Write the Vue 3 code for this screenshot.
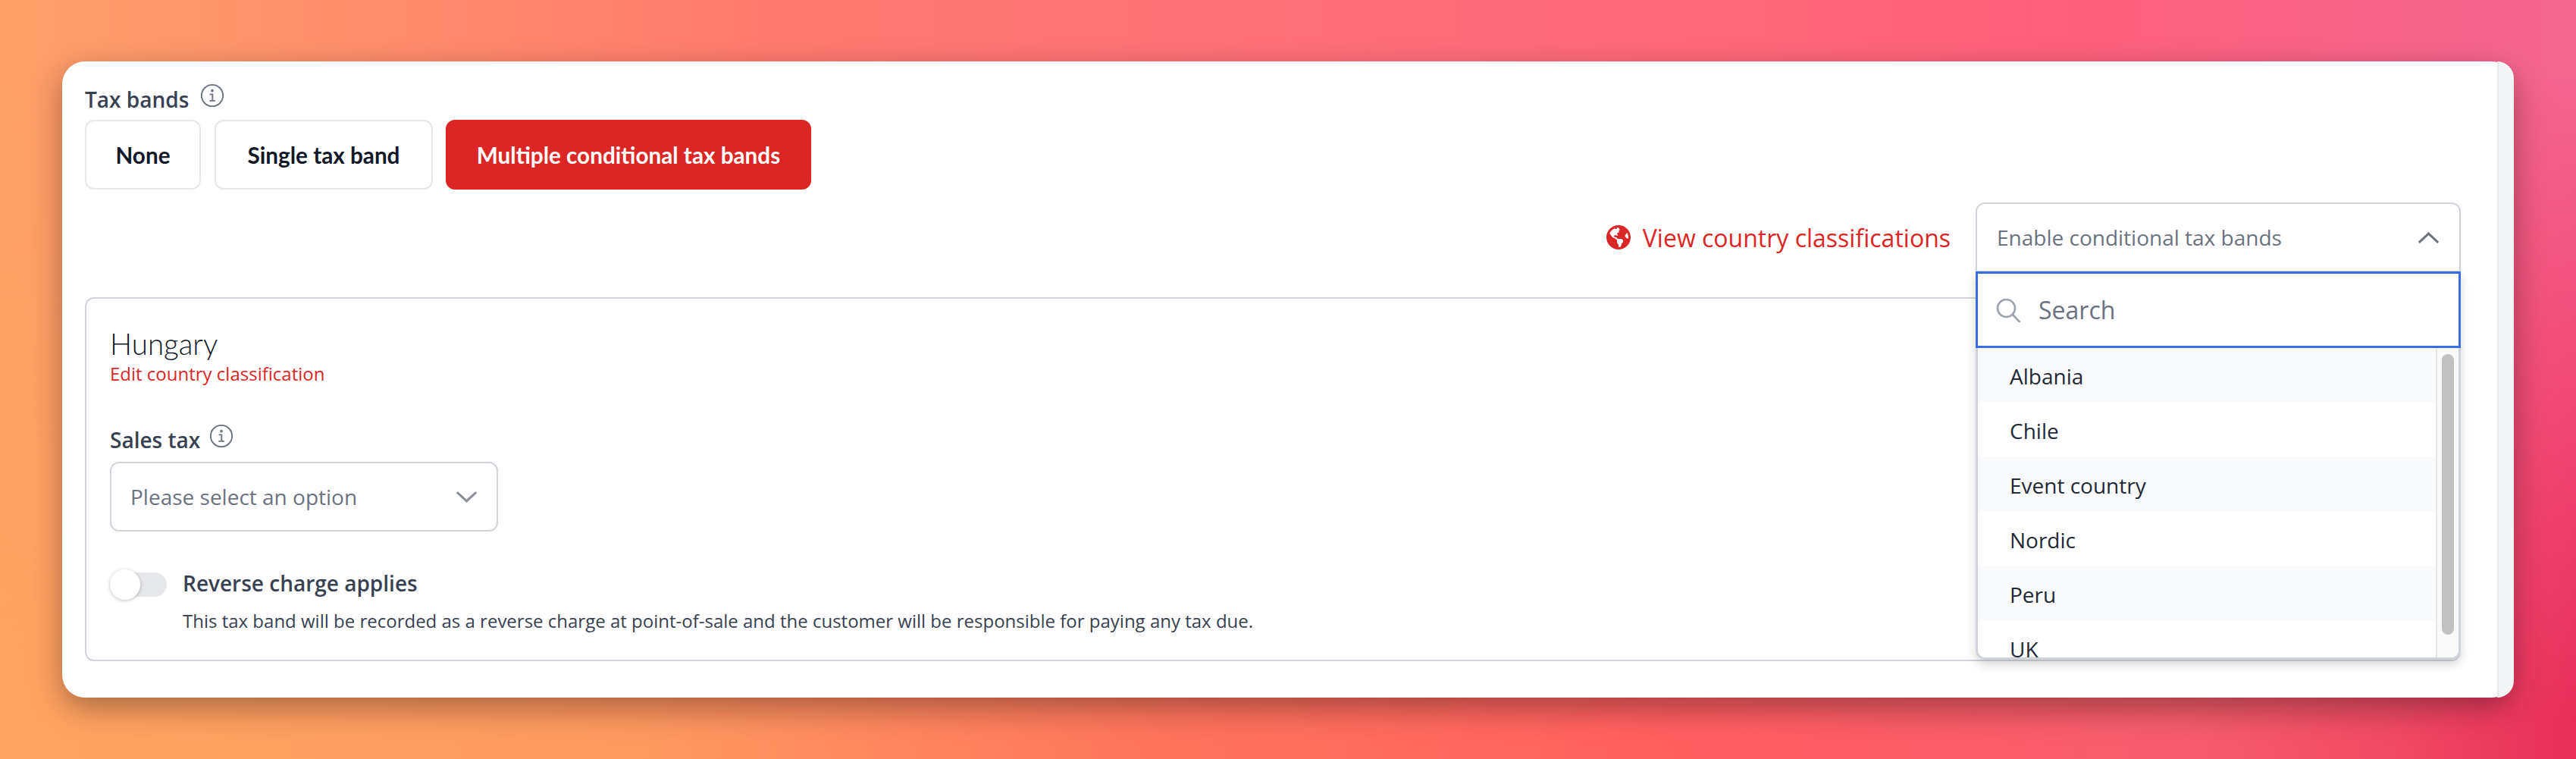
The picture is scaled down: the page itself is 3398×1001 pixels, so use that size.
<template>
  <div class="page">
    <div class="card">
      <div class="main">
        <div class="field-label">
          <span>Tax bands</span>
          <svg class="info" viewBox="0 0 24 24" fill="none" stroke="currentColor" stroke-width="1.4">
            <circle cx="12" cy="12" r="10.6" />
            <path d="M10 10.8h2.2v6.4M9.8 17.2h4.6" stroke-linecap="round" />
            <circle cx="12" cy="7.2" r="0.7" fill="currentColor" />
          </svg>
        </div>
        <div class="band-buttons">
          <button
            v-for="b in bands"
            :key="b"
            class="band-btn"
            :class="{ active: b === activeBand }"
          >
            {{ b }}
          </button>
        </div>

        <div class="tools">
          <a class="country-link">
            <svg class="globe" viewBox="0 0 496 512" fill="currentColor">
              <path d="M248 8C111.03 8 0 119.03 0 256s111.03 248 248 248 248-111.03 248-248S384.97 8 248 8zm82.29 357.6c-3.9 3.88-7.99 7.95-11.31 11.28-2.99 3-5.1 6.7-6.17 10.71-1.51 5.66-2.73 11.38-4.77 16.87l-17.39 46.85c-13.76 3-28 4.69-42.65 4.69v-27.38c1.69-12.62-7.64-36.26-22.63-51.25-6-6-9.37-14.14-9.37-22.63v-32.01c0-11.64-6.27-22.34-16.46-27.97-14.37-7.95-34.81-19.06-48.81-26.11-11.48-5.78-22.1-13.14-31.65-21.75l-.8-.72a114.792 114.792 0 0 1-18.06-20.74c-9.38-13.77-24.66-36.42-34.59-51.14 20.47-45.5 57.36-82.04 103.2-101.89l24.01 12.01C203.48 89.74 216 82.01 216 70.11v-11.3c7.99-1.29 16.12-2.11 24.39-2.42l28.3 28.3c6.25 6.25 6.25 16.38 0 22.63L264 112l-10.34 10.34c-3.12 3.12-3.12 8.19 0 11.31l4.69 4.69c3.12 3.12 3.12 8.19 0 11.31l-8 8a8.008 8.008 0 0 1-5.66 2.34h-8.99c-2.08 0-4.08.81-5.58 2.27l-9.92 9.65a8.008 8.008 0 0 0-1.58 9.31l15.59 31.19c2.66 5.32-1.21 11.58-7.15 11.58h-5.64c-1.93 0-3.79-.7-5.24-1.96l-9.28-8.06a16.017 16.017 0 0 0-15.55-3.1l-31.17 10.39a11.95 11.95 0 0 0-8.17 11.34c0 4.53 2.56 8.66 6.61 10.69l11.08 5.54c9.41 4.71 19.79 7.16 30.31 7.16s22.59 27.29 32 32h66.75c8.49 0 16.62 3.37 22.63 9.37l13.69 13.69a30.503 30.503 0 0 1 8.93 21.57 46.536 46.536 0 0 1-13.72 32.98zM417 274.25c-5.79-1.45-10.84-5-14.15-9.97l-17.98-26.97a23.97 23.97 0 0 1 0-26.62l19.59-29.38c2.32-3.47 5.5-6.28 9.24-8.15l12.98-6.49C440.2 193.59 448 223.87 448 256c0 8.67-.74 17.16-1.82 25.54L417 274.25z" />
            </svg>
            View country classifications
          </a>
          <div class="picker">
            <div class="picker-trigger">
              <span>Enable conditional tax bands</span>
              <svg class="chev" viewBox="0 0 32 18" fill="none" stroke="currentColor" stroke-width="3.2">
                <path d="M2 16 16 3l14 13" />
              </svg>
            </div>
            <div class="picker-panel">
              <div class="picker-search">
                <svg class="search-icon" viewBox="0 0 32 32" fill="none" stroke="currentColor" stroke-width="2.6">
                  <circle cx="13.5" cy="13.5" r="11.5" />
                  <path d="m22 22 9 9.5" stroke-linecap="round" />
                </svg>
                <span>Search</span>
              </div>
              <div class="picker-list">
                <div class="rows">
                  <div v-for="c in countries" :key="c" class="row">{{ c }}</div>
                </div>
                <div class="scroll-track"><div class="scroll-thumb"></div></div>
              </div>
            </div>
          </div>
        </div>

        <section class="country-box">
          <h3 class="country-name">Hungary</h3>
          <a class="edit-link">Edit country classification</a>

          <div class="field-label sales">
            <span>Sales tax</span>
            <svg class="info" viewBox="0 0 24 24" fill="none" stroke="currentColor" stroke-width="1.4">
              <circle cx="12" cy="12" r="10.6" />
              <path d="M10 10.8h2.2v6.4M9.8 17.2h4.6" stroke-linecap="round" />
              <circle cx="12" cy="7.2" r="0.7" fill="currentColor" />
            </svg>
          </div>
          <div class="select">
            <span>Please select an option</span>
            <svg class="chev down" viewBox="0 0 32 18" fill="none" stroke="currentColor" stroke-width="3.2">
              <path d="M2 2l14 13L30 2" />
            </svg>
          </div>

          <div class="toggle-row">
            <div class="toggle"><div class="knob"></div></div>
            <div class="toggle-text">
              <div class="toggle-title">Reverse charge applies</div>
              <div class="toggle-desc">This tax band will be recorded as a reverse charge at point-of-sale and the customer will be responsible for paying any tax due.</div>
            </div>
          </div>
        </section>
      </div>
      <div class="side-strip"></div>
    </div>
  </div>
</template>

<script setup>
const bands = ["None", "Single tax band", "Multiple conditional tax bands"];
const activeBand = "Multiple conditional tax bands";
const countries = ["Albania", "Chile", "Event country", "Nordic", "Peru", "UK"];
</script>

<style>
html,
body {
  margin: 0;
  padding: 0;
}
</style>

<style scoped>
.page {
  position: relative;
  box-sizing: border-box;
  width: 3398px;
  height: 1001px;
  padding: 81px 82px;
  overflow: hidden;
  font-family: "Open Sans", sans-serif;
  background: linear-gradient(to right, #ffa563 0%, #ff9760 25%, #ff745c 45%, #ff5e5e 65%, #f55c6c 85%, #f04a66 93%, #ec2e5c 100%);
}
/* top half of the backdrop runs pinker, fades into the base gradient */
.page::before {
  content: "";
  position: absolute;
  inset: 0;
  background: linear-gradient(to right, #ff9e68 0%, #ff7a6e 30%, #ff7077 50%, #fd5f7c 80%, #f3648f 100%);
  -webkit-mask-image: linear-gradient(to bottom, #000 10%, transparent 95%);
  mask-image: linear-gradient(to bottom, #000 10%, transparent 95%);
}
.card {
  position: relative;
  display: flex;
  height: 839px;
  background: #fff;
  border-radius: 30px;
  box-shadow: 0 14px 40px rgba(0, 0, 0, 0.34);
}
.main {
  flex: 1;
  min-width: 0;
  padding: 30px 48px 0 30px;
}
.side-strip {
  width: 20px;
  background: #f3f4f6;
  border-left: 2px solid #e5e7eb;
  border-radius: 0 30px 30px 0;
}

.field-label {
  display: flex;
  align-items: flex-start;
  gap: 15px;
  height: 47px;
  font-size: 28px;
  line-height: 40px;
  font-weight: 600;
  color: #374151;
}
.info {
  width: 32px;
  height: 32px;
  margin-top: -1px;
  color: #6b7280;
}
.band-buttons {
  display: flex;
  gap: 17px;
}
.band-btn {
  height: 92px;
  padding: 0;
  font-family: Lato, sans-serif;
  font-size: 29.7px;
  font-weight: 700;
  color: #111827;
  background: #fff;
  border: 2px solid #e5e7eb;
  border-radius: 12px;
}
/* the three buttons keep the reference's widths, the stand-in font runs narrower */
.band-btn:nth-child(1) {
  width: 153px;
  margin-right: 1px;
}
.band-btn:nth-child(2) {
  width: 288px;
}
.band-btn:nth-child(3) {
  width: 482px;
}
.band-btn.active {
  color: #fff;
  background: #dc2626;
  border-color: #dc2626;
}

.tools {
  display: flex;
  justify-content: flex-end;
  align-items: center;
  gap: 33px;
  margin-top: 17px;
}
.country-link {
  display: flex;
  align-items: center;
  gap: 16px;
  font-size: 32px;
  color: #dc2626;
}
.globe {
  width: 32px;
  height: 34px;
}
.picker {
  position: relative;
  width: 640px;
}
.picker-trigger {
  box-sizing: border-box;
  display: flex;
  align-items: center;
  justify-content: space-between;
  height: 92px;
  padding: 0 26px;
  font-size: 28px;
  color: #6b7280;
  background: #fff;
  border: 2px solid #d1d5db;
  border-radius: 12px 12px 0 0;
}
.chev {
  width: 29px;
  height: 17px;
  color: #6b7280;
}
.picker-panel {
  position: absolute;
  top: 91px;
  left: 0;
  right: 0;
  z-index: 2;
  background: #fff;
  border-radius: 0 0 12px 12px;
  box-shadow: 0 6px 14px rgba(0, 0, 0, 0.16);
}
.picker-search {
  box-sizing: border-box;
  display: flex;
  align-items: center;
  gap: 24px;
  height: 101px;
  padding: 0 24px;
  font-size: 32px;
  color: #6b7280;
  border: 3px solid #3b6fe0;
}
.search-icon {
  width: 32px;
  height: 32px;
  color: #9ca3af;
}
.picker-list {
  box-sizing: border-box;
  display: flex;
  height: 411px;
  overflow: hidden;
  border: 3px solid #cfd3da;
  border-top: none;
  border-radius: 0 0 12px 12px;
}
.rows {
  flex: 1;
  min-width: 0;
}
.row {
  box-sizing: border-box;
  height: 72px;
  padding-left: 42px;
  font-size: 28px;
  line-height: 74px;
  color: #1f2937;
}
.row:nth-child(odd) {
  background: #f9fafb;
}
.scroll-track {
  box-sizing: border-box;
  width: 30px;
  padding: 8px 6px 0 6px;
  background: #fafafa;
  border-left: 2px solid #e8e8e8;
}
.scroll-thumb {
  height: 370px;
  background: #c1c1c1;
  border-radius: 8px;
}

.country-box {
  box-sizing: border-box;
  height: 480px;
  margin-top: 33px;
  padding: 36px 31px 0;
  border: 2px solid #d1d5db;
  border-radius: 12px;
}
.country-name {
  margin: 0;
  font-family: Lato, sans-serif;
  font-size: 38.5px;
  line-height: 46px;
  font-weight: 300;
  color: #111827;
}
.edit-link {
  display: block;
  font-size: 24px;
  line-height: 34px;
  color: #dc2626;
}
.sales {
  gap: 12px;
  margin-top: 50px;
  height: 49px;
}
.select {
  box-sizing: border-box;
  display: flex;
  align-items: center;
  justify-content: space-between;
  width: 512px;
  height: 92px;
  padding: 0 25px;
  font-size: 28px;
  color: #6b7280;
  border: 2px solid #d1d5db;
  border-radius: 12px;
}
.chev.down {
  color: #8a8f98;
}
.toggle-row {
  display: flex;
  gap: 21px;
  margin-top: 48px;
}
.toggle {
  position: relative;
  flex: none;
  width: 75px;
  height: 32px;
  margin-top: 6px;
  background: #e5e7eb;
  border-radius: 16px;
}
.knob {
  position: absolute;
  top: -4px;
  left: 0;
  width: 40px;
  height: 40px;
  background: #fff;
  border-radius: 50%;
  box-shadow: 0 1px 5px rgba(0, 0, 0, 0.25);
}
.toggle-title {
  font-size: 28px;
  line-height: 40px;
  font-weight: 600;
  color: #374151;
}
.toggle-desc {
  margin-top: 14px;
  font-size: 24px;
  line-height: 32px;
  color: #374151;
}
</style>
